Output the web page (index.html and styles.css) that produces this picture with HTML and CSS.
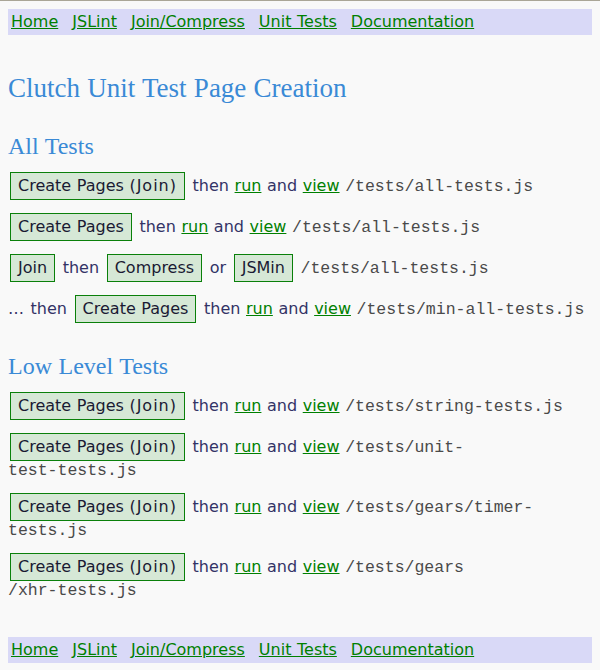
FILE: index.html
```html
<!DOCTYPE html>
<html lang="en">
<head>
<meta charset="utf-8">
<title>Clutch Unit Test Page Creation</title>
<link rel="stylesheet" href="styles.css">
</head>
<body>
<nav class="nav">
  <a href="#">Home</a>
  <a href="#">JSLint</a>
  <a href="#">Join/Compress</a>
  <a href="#">Unit Tests</a>
  <a href="#">Documentation</a>
</nav>

<h1 class="title">Clutch Unit Test Page Creation</h1>

<h2 class="section">All Tests</h2>
<div class="rows">
  <div class="row"><button class="btn">Create Pages <span class="paren">(Join)</span></button> then <a class="lnk" href="#">run</a> and <a class="lnk" href="#">view</a> <code class="path">/tests/all-tests.js</code></div>
  <div class="row"><button class="btn">Create Pages</button> then <a class="lnk" href="#">run</a> and <a class="lnk" href="#">view</a> <code class="path">/tests/all-tests.js</code></div>
  <div class="row"><button class="btn">Join</button> then <button class="btn">Compress</button> or <button class="btn">JSMin</button> <code class="path">/tests/all-tests.js</code></div>
  <div class="row"><span class="ellipsis">&hellip;</span> then <button class="btn">Create Pages</button> then <a class="lnk" href="#">run</a> and <a class="lnk" href="#">view</a> <code class="path">/tests/min-all-tests.js</code></div>
</div>

<h2 class="section">Low Level Tests</h2>
<div class="rows">
  <div class="row"><button class="btn">Create Pages <span class="paren">(Join)</span></button> then <a class="lnk" href="#">run</a> and <a class="lnk" href="#">view</a> <code class="path">/tests/string-tests.js</code></div>
  <div class="row"><button class="btn">Create Pages <span class="paren">(Join)</span></button> then <a class="lnk" href="#">run</a> and <a class="lnk" href="#">view</a> <code class="path">/tests/unit-<br>test-tests.js</code></div>
  <div class="row"><button class="btn">Create Pages <span class="paren">(Join)</span></button> then <a class="lnk" href="#">run</a> and <a class="lnk" href="#">view</a> <code class="path">/tests/gears/timer-<br>tests.js</code></div>
  <div class="row"><button class="btn">Create Pages <span class="paren">(Join)</span></button> then <a class="lnk" href="#">run</a> and <a class="lnk" href="#">view</a> <code class="path">/tests/gears<br>/xhr-tests.js</code></div>
</div>

<nav class="nav nav-foot">
  <a href="#">Home</a>
  <a href="#">JSLint</a>
  <a href="#">Join/Compress</a>
  <a href="#">Unit Tests</a>
  <a href="#">Documentation</a>
</nav>
</body>
</html>
```

FILE: styles.css
```css
html {
  border-top: 1px solid #aaa697;
  background: #f9f9f9;
}

body {
  margin: 8px 8px 0;
  font-family: "DejaVu Sans", Verdana, sans-serif;
  font-size: 16px;
  line-height: 18px;
  color: #333366;
  word-spacing: 0.5px;
}

.nav {
  display: flex;
  gap: 14px;
  background: #d9d9f7;
  padding: 2px 3px 3px;
  line-height: 21px;
}

.nav a {
  color: #008000;
  text-decoration: underline;
}

.nav-foot {
  margin-top: 37px;
}

.title {
  font-family: "Liberation Serif", "Times New Roman", serif;
  font-weight: normal;
  font-size: 27px;
  line-height: 30px;
  color: #3a8ad6;
  margin: 38px 0 0;
}

.section {
  font-family: "Liberation Serif", "Times New Roman", serif;
  font-weight: normal;
  font-size: 24px;
  line-height: 27px;
  color: #3a8ad6;
  margin: 30px 0 12px;
}

.rows {
  display: flex;
  flex-direction: column;
  gap: 13px;
}

.btn {
  font: inherit;
  line-height: 18px;
  word-spacing: 0.5px;
  padding: 4px 7px;
  margin: 0 2px;
  border: 1px solid #0a800a;
  border-radius: 0;
  background: #d6e8d6;
  color: #1a1a33;
}

.paren {
  letter-spacing: 1px;
}

.ellipsis {
  letter-spacing: 1px;
}

.lnk {
  color: #008000;
  text-decoration: underline;
}

.path {
  font-family: "Liberation Mono", "Courier New", monospace;
  font-size: 16.5px;
  color: #4a4a4a;
  word-spacing: 0;
}
```
